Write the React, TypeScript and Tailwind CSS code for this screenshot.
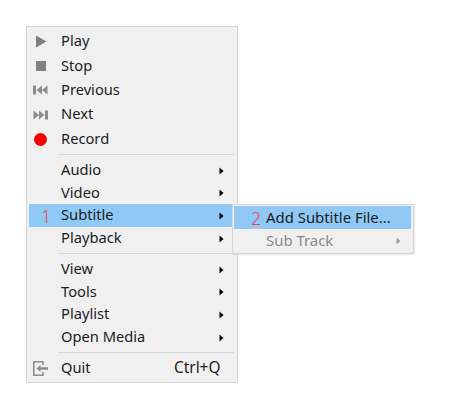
const font = "font-['Noto_Sans','Open_Sans',sans-serif]";

const Arrow = ({ color = "#000" }: { color?: string }) => (
  <svg width="5" height="8" viewBox="0 0 5 8" className="absolute left-[190px] top-1/2 -translate-y-1/2">
    <path d="M0.5 0.5 L4.5 4 L0.5 7.5 Z" fill={color} />
  </svg>
);

const Play = () => (
  <svg width="12" height="13" viewBox="0 0 12 13"><path d="M1 0.5 L11.5 6.5 L1 12.5 Z" fill="#808080" /></svg>
);
const Stop = () => (
  <svg width="10" height="10" viewBox="0 0 10 10"><rect width="10" height="10" fill="#808080" /></svg>
);
const Prev = () => (
  <svg width="15" height="10" viewBox="0 0 15 10">
    <rect x="0" y="0.5" width="3" height="9" fill="#8c8c8c" />
    <path d="M9 0.5 V9.5 L3.5 5 Z M14.5 0.5 V9.5 L9 5 Z" fill="#8c8c8c" />
  </svg>
);
const Next = () => (
  <svg width="15" height="10" viewBox="0 0 15 10">
    <rect x="12" y="0.5" width="3" height="9" fill="#8c8c8c" />
    <path d="M0.5 0.5 V9.5 L6 5 Z M6 0.5 V9.5 L11.5 5 Z" fill="#8c8c8c" />
  </svg>
);
const Record = () => <span className="block w-[13px] h-[13px] rounded-full bg-[#f50000]" />;
const Quit = () => (
  <svg width="15" height="15" viewBox="0 0 15 15" fill="none">
    <path d="M10 4 V0.8 H0.8 V14.2 H10 V11" stroke="#8c8c8c" strokeWidth="1.6" />
    <path d="M3.5 7.5 L7.5 4 V6.3 H15 V8.7 H7.5 V11 Z" fill="#8c8c8c" />
  </svg>
);

function Item({ label, icon, arrow, h, shortcut, active, num }: { label: string; icon?: React.ReactNode; arrow?: boolean; h: string; shortcut?: string; active?: boolean; num?: string }) {
  return (
    <div className={`relative flex items-center ${h} ${active ? "bg-[#90c8f6]" : ""}`}>
      <span className="flex w-[23px] justify-center items-center">{icon}</span>
      {num && <span className="absolute left-[12px] text-[#f04455] text-[18px] leading-none font-light">{num}</span>}
      <span className="ml-[9px] text-[14.7px] text-[#1c1c1c] leading-none -translate-y-px">{label}</span>
      {shortcut && <span className="absolute left-[145px] text-[15.4px] text-[#1c1c1c] leading-none">{shortcut}</span>}
      {arrow && <Arrow />}
    </div>
  );
}

const Sep = ({ cls }: { cls: string }) => <div className={`ml-[29px] mr-[1px] h-px bg-[#d8d8d8] ${cls}`} />;

export default function App() {
  return (
    <div className={`${font} w-[450px] h-[414px] bg-white pt-[26px] pl-[26px]`}>
      <div className="relative w-[212px] h-[357px] bg-[#f0f0f0] border border-[#d6d6d6] px-[2px] pt-[2px]">
        <Item h="h-[25px]" label="Play" icon={<Play />} />
        <Item h="h-[24px]" label="Stop" icon={<Stop />} />
        <Item h="h-[24px]" label="Previous" icon={<Prev />} />
        <Item h="h-[25px]" label="Next" icon={<Next />} />
        <Item h="h-[24px]" label="Record" icon={<Record />} />
        <Sep cls="mt-[3px] mb-[4px]" />
        <Item h="h-[23px]" label="Audio" arrow />
        <Item h="h-[22px]" label="Video" arrow />
        <Item h="h-[23px]" label="Subtitle" arrow active num="1" />
        <Item h="h-[23px]" label="Playback" arrow />
        <Sep cls="mt-[3px] mb-[4px]" />
        <Item h="h-[23px]" label="View" arrow />
        <Item h="h-[22px]" label="Tools" arrow />
        <Item h="h-[23px]" label="Playlist" arrow />
        <Item h="h-[23px]" label="Open Media" arrow />
        <Sep cls="mt-[3px] mb-[4px]" />
        <Item h="h-[22px]" label="Quit" icon={<Quit />} shortcut="Ctrl+Q" />

        <div className="absolute left-[205px] top-[177px] w-[182px] h-[50px] bg-[#f0f0f0] border border-[#d6d6d6] shadow-[1px_1px_1px_rgba(0,0,0,0.08)] pl-[1px] pr-[2px] pt-[1px]">
          <div className="relative flex items-center h-[23px] bg-[#90c8f6]">
            <span className="absolute left-[17px] text-[#f04455] text-[18px] leading-none font-light">2</span>
            <span className="ml-[32px] text-[14.9px] text-[#1c1c1c] leading-none">Add Subtitle File...</span>
          </div>
          <div className="relative flex items-center h-[23px]">
            <span className="ml-[32px] text-[14.9px] text-[#8a8a8a] leading-none">Sub Track</span>
            <svg width="5" height="8" viewBox="0 0 5 8" className="absolute left-[162px] top-1/2 -translate-y-1/2">
              <path d="M0.5 0.5 L4.5 4 L0.5 7.5 Z" fill="#a0a0a0" />
            </svg>
          </div>
        </div>
      </div>
    </div>
  );
}
